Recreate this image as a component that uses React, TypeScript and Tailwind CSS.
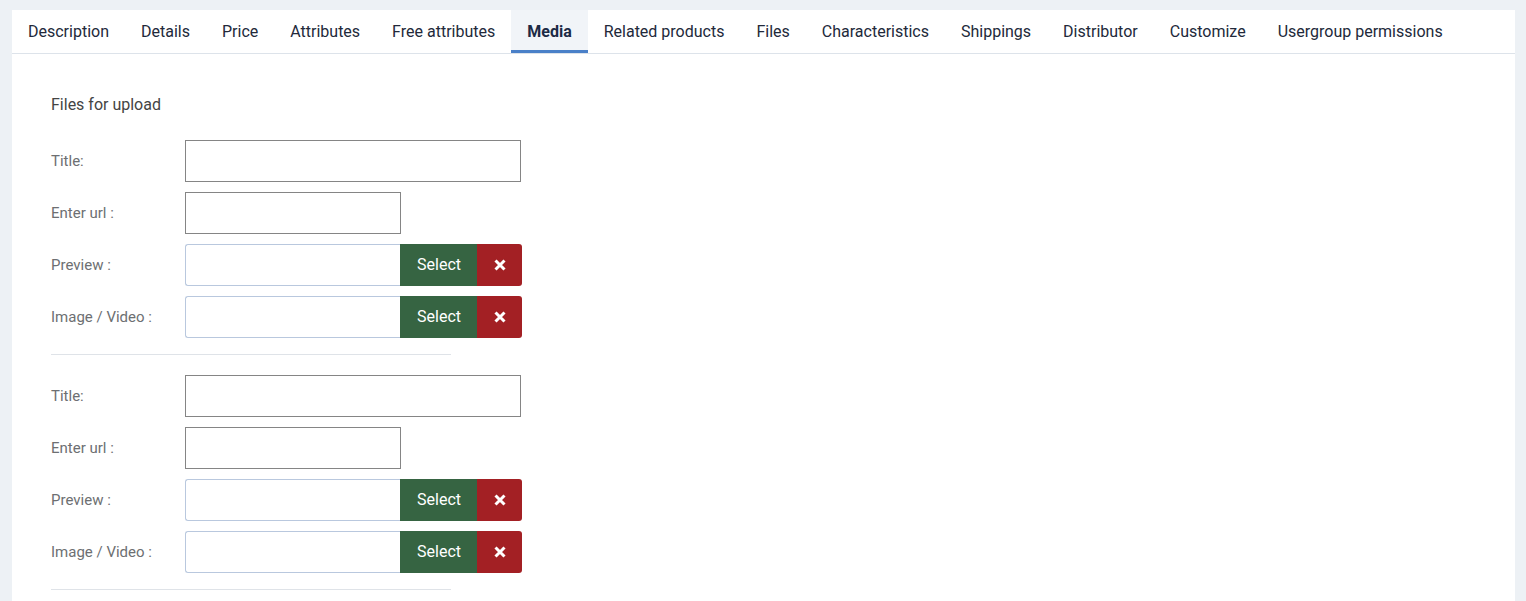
import React from 'react';

const tabs = [
  'Description',
  'Details',
  'Price',
  'Attributes',
  'Free attributes',
  'Media',
  'Related products',
  'Files',
  'Characteristics',
  'Shippings',
  'Distributor',
  'Customize',
  'Usergroup permissions',
];

function Label({ children }: { children: React.ReactNode }) {
  return <div className="w-[134px] shrink-0 text-[15px] text-[#6d6f72]">{children}</div>;
}

function MediaField({ label }: { label: string }) {
  return (
    <div className="flex items-center">
      <Label>{label}</Label>
      <div className="flex h-[42px]">
        <div className="w-[215px] rounded-l-[3px] border border-r-0 border-[#b9c8de] bg-white" />
        <button className="w-[77px] bg-[#366442] pl-[1px] text-[16px] text-white">Select</button>
        <button className="flex w-[45px] items-center justify-center rounded-r-[3px] bg-[#a32024]">
          <svg width="14" height="14" viewBox="0 0 14 14">
            <path d="M2.5 2.5L11.5 11.5M11.5 2.5L2.5 11.5" stroke="white" strokeWidth="3" strokeLinecap="butt" />
          </svg>
        </button>
      </div>
    </div>
  );
}

function FileGroup() {
  return (
    <div>
      <div className="flex flex-col gap-[10px]">
        <div className="flex items-center">
          <Label>Title:</Label>
          <div className="h-[42px] w-[336px] border border-[#858585] bg-white" />
        </div>
        <div className="flex items-center">
          <Label>Enter url :</Label>
          <div className="h-[42px] w-[216px] border border-[#858585] bg-white" />
        </div>
        <MediaField label="Preview :" />
        <MediaField label="Image / Video :" />
      </div>
      <div className="mt-4 mb-[20px] h-px w-[400px] bg-[#dfe3e8]" />
    </div>
  );
}

export default function App() {
  return (
    <div className="min-h-[601px] bg-[#edf1f5] pt-[10px] pl-[12px] pr-[11px]" style={{ fontFamily: 'Roboto, sans-serif' }}>
      <div className="min-h-[591px] bg-white">
        <div className="flex h-[44px] border-b border-[#dde3ea] px-0">
          {tabs.map((t) => (
            <div
              key={t}
              className={`flex h-[43px] items-center px-4 text-[16px] ${
                t === 'Media'
                  ? 'border-b-[3px] border-[#4a80c8] bg-[#f1f4f8] pt-[3px] font-bold text-[#1c2a45]'
                  : 'text-[#22293a]'
              }`}
            >
              {t}
            </div>
          ))}
        </div>
        <div className="pl-[39px] pt-[40px]">
          <div className="mb-[24px] text-[16px] leading-[22px] text-[#444]">Files for upload</div>
          <FileGroup />
          <FileGroup />
        </div>
      </div>
    </div>
  );
}
